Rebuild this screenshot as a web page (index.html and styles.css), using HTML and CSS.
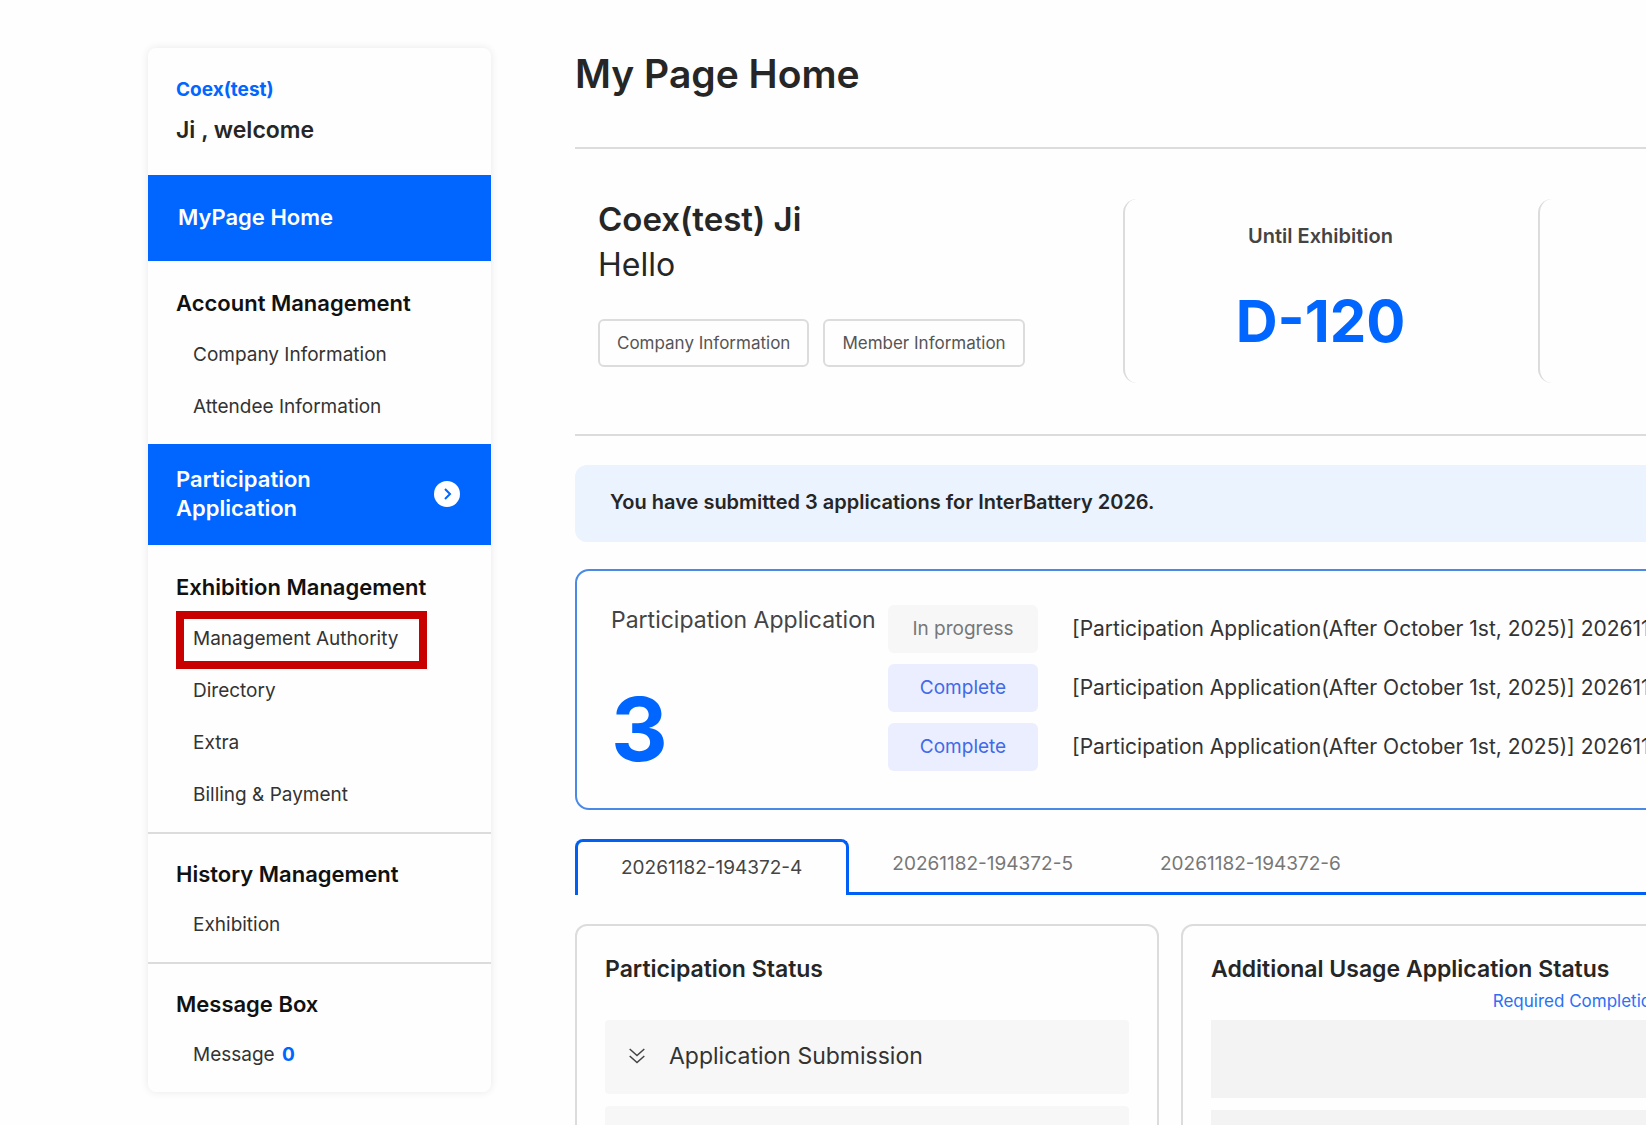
FILE: index.html
```html
<!DOCTYPE html>
<html lang="en">
<head>
<meta charset="utf-8">
<meta name="viewport" content="width=device-width, initial-scale=1">
<title>My Page Home</title>
<link rel="stylesheet" href="styles.css">
</head>
<body>
<div class="page">
  <aside class="sidebar">
    <div class="profile">
      <p class="profile-company">Coex(test)</p>
      <p class="profile-name">Ji , welcome</p>
    </div>
    <nav aria-label="My page">
      <a class="nav-block nav-home" href="#">MyPage Home</a>
      <section class="nav-group">
        <h2>Account Management</h2>
        <ul>
          <li><a href="#">Company Information</a></li>
          <li><a href="#">Attendee Information</a></li>
        </ul>
      </section>
      <a class="nav-block nav-apply" href="#">
        <span>Participation<br>Application</span>
        <svg class="nav-arrow" viewBox="0 0 26 26" aria-hidden="true"><circle cx="13" cy="13" r="13" fill="#fff"/><path d="M11 8l5 5-5 5" fill="none" stroke="#0066ff" stroke-width="2"/></svg>
      </a>
      <section class="nav-group">
        <h2>Exhibition Management</h2>
        <ul>
          <li class="marked"><a href="#">Management Authority</a></li>
          <li><a href="#">Directory</a></li>
          <li><a href="#">Extra</a></li>
          <li><a href="#">Billing &amp; Payment</a></li>
        </ul>
      </section>
      <section class="nav-group ruled">
        <h2>History Management</h2>
        <ul>
          <li><a href="#">Exhibition</a></li>
        </ul>
      </section>
      <section class="nav-group ruled">
        <h2>Message Box</h2>
        <ul>
          <li><a href="#">Message <b class="count">0</b></a></li>
        </ul>
      </section>
    </nav>
  </aside>

  <main class="main">
    <h1>My Page Home</h1>
    <section class="summary">
      <div class="greeting">
        <p class="greeting-name">Coex(test) Ji</p>
        <p class="greeting-text">Hello</p>
        <div class="greeting-actions">
          <button type="button">Company Information</button>
          <button type="button">Member Information</button>
        </div>
      </div>
      <div class="stat">
        <p class="stat-label">Until Exhibition</p>
        <p class="stat-value">D-120</p>
      </div>
      <div class="stat"></div>
    </section>

    <p class="notice">You have submitted 3 applications for InterBattery 2026.</p>

    <section class="applications">
      <div class="total">
        <h2>Participation Application</h2>
        <p class="total-value">3</p>
      </div>
      <ul class="application-list">
        <li><span class="badge">In progress</span><a href="#">[Participation Application(After October 1st, 2025)] 20261182-194372-4</a></li>
        <li><span class="badge done">Complete</span><a href="#">[Participation Application(After October 1st, 2025)] 20261182-194372-5</a></li>
        <li><span class="badge done">Complete</span><a href="#">[Participation Application(After October 1st, 2025)] 20261182-194372-6</a></li>
      </ul>
    </section>

    <div class="tabs" role="tablist">
      <button type="button" role="tab" aria-selected="true">20261182-194372-4</button>
      <button type="button" role="tab" aria-selected="false">20261182-194372-5</button>
      <button type="button" role="tab" aria-selected="false">20261182-194372-6</button>
    </div>

    <div class="cards">
      <section class="card">
        <h2>Participation Status</h2>
        <div class="row">
          <svg class="chevrons" viewBox="0 0 16 16" aria-hidden="true"><path d="M.7 1L8 7.500 15.300 1M.7 8L8 14.500 15.300 8" fill="none" stroke="#444" stroke-width="1.500"/></svg>
          Application Submission
        </div>
        <div class="row"></div>
      </section>
      <section class="card card-extra">
        <h2>Additional Usage Application Status</h2>
        <p class="card-note">Required Completion</p>
        <div class="row"></div>
        <div class="row"></div>
      </section>
    </div>
  </main>
</div>
</body>
</html>
```
FILE: styles.css
```css
* { box-sizing: border-box; }

:root {
  --blue: #0066ff;
  --line: #dcdcdc;
}

body {
  margin: 0;
  background: #fefefe;
  color: #262626;
  font-family: Inter, "Liberation Sans", sans-serif;
  font-size: 19px;
  overflow: hidden;
}

h1, h2, p, ul { margin: 0; padding: 0; }
ul { list-style: none; }
a { color: inherit; text-decoration: none; }
button { font: inherit; cursor: pointer; }

.page {
  display: flex;
  align-items: flex-start;
  gap: 84px;
  height: 100vh;
  padding: 48px 0 0 148px;
  overflow: hidden;
}

/* Sidebar */
.sidebar {
  flex: 0 0 343px;
  border-radius: 8px;
  background: #fefefe;
  box-shadow: 0 0 8px rgba(0, 0, 0, 0.09);
}

.profile {
  height: 127px;
  padding: 27px 28px 0;
  font-weight: 600;
}
.profile-company { color: var(--blue); font-size: 19px; font-weight: 700; line-height: 30px; }
.profile-name { margin-top: 7px; font-size: 23px; line-height: 36px; }

.nav-block {
  display: flex;
  align-items: center;
  background: var(--blue);
  color: #fff;
  font-size: 22px;
  font-weight: 600;
  line-height: 29px;
}
.nav-home { height: 86px; padding: 0 30px 2px; }
.nav-apply {
  justify-content: space-between;
  height: 101px;
  padding: 0 31px 2px 28px;
}
.nav-arrow { width: 26px; height: 26px; }

.nav-group { padding: 24px 28px 11px; }
.nav-group h2 {
  margin-bottom: 8px;
  color: #111;
  font-size: 22px;
  font-weight: 600;
  line-height: 36px;
}
.nav-group li {
  position: relative;
  padding-left: 17px;
  color: #333;
  line-height: 52px;
}
.nav-group.ruled { padding-top: 22px; border-top: 2px solid var(--line); }
.nav-group.ruled h2 { margin-bottom: 7px; }
.count { margin-left: 2px; color: var(--blue); font-weight: 700; }

.marked::after {
  content: "";
  position: absolute;
  inset: -2px 36px -4px 0;
  border: 8px solid #c80000;
}

/* Main column */
.main { flex: 1 0 1190px; min-width: 0; }

h1 {
  height: 99px;
  font-size: 39px;
  font-weight: 600;
  line-height: 52px;
}

.summary {
  display: flex;
  height: 289px;
  padding-top: 48px;
  border-top: 2px solid var(--line);
  border-bottom: 2px solid var(--line);
}
.greeting { flex: 0 0 548px; padding-left: 23px; }
.greeting-name { font-size: 33px; font-weight: 600; line-height: 45px; }
.greeting-text { font-size: 32px; line-height: 45px; }
.greeting-actions { display: flex; gap: 14px; margin-top: 32px; }
.greeting-actions button {
  height: 48px;
  padding: 0 17px;
  border: 2px solid var(--line);
  border-radius: 6px;
  background: #fefefe;
  color: #555;
  font-size: 17px;
}
.stat {
  flex: 0 0 415px;
  height: 184px;
  margin-top: 2px;
  padding: 22px 22px 0 0;
  border-left: 2px solid var(--line);
  border-radius: 14px;
  text-align: center;
}
.stat-label { color: #444; font-size: 20px; font-weight: 600; line-height: 30px; }
.stat-value {
  margin-top: 34px;
  color: var(--blue);
  font-size: 58px;
  font-weight: 700;
  line-height: 72px;
}

.notice {
  margin-top: 29px;
  padding: 22px 35px 25px;
  border-radius: 12px;
  background: #ebf3ff;
  font-size: 20px;
  font-weight: 600;
  line-height: 30px;
}

.applications {
  display: flex;
  margin-top: 27px;
  padding: 34px 34px 37px;
  border: 2px solid #4a8ae6;
  border-radius: 14px;
}
.total { flex: 0 0 277px; }
.total h2 { color: #444; font-size: 23px; font-weight: 400; line-height: 30px; }
.total-value {
  margin-top: 52px;
  color: var(--blue);
  font-size: 88px;
  font-weight: 700;
  line-height: 84px;
}
.application-list { display: grid; gap: 11px; }
.application-list li {
  display: flex;
  align-items: center;
  gap: 34px;
  color: #333;
  font-size: 21px;
  line-height: 48px;
  white-space: nowrap;
}
.badge {
  width: 150px;
  border-radius: 6px;
  background: #f7f7f7;
  color: #777;
  font-size: 19px;
  text-align: center;
}
.badge.done { background: #ebeeff; color: #4169e8; }

.tabs {
  display: flex;
  margin-top: 29px;
  height: 56px;
}
.tabs button {
  padding: 0 44px 5px 43px;
  border: 0 solid #0060f5;
  border-bottom-width: 3px;
  background: none;
  color: #777;
  font-size: 19px;
}
.tabs button[aria-selected="true"] {
  padding: 0 44px 2px 43px;
  border-width: 3px 3px 0;
  border-radius: 8px 8px 0 0;
  color: #444;
}
.tabs::after {
  content: "";
  flex: 1;
  border-bottom: 3px solid #0060f5;
}

.cards {
  display: grid;
  grid-template-columns: 1fr 1fr;
  gap: 22px;
  margin-top: 29px;
}
.card {
  height: 320px;
  padding: 28px;
  border: 2px solid var(--line);
  border-radius: 12px;
}
.card h2 {
  height: 66px;
  font-size: 23px;
  font-weight: 600;
  line-height: 30px;
}
.row {
  display: flex;
  align-items: center;
  gap: 24px;
  height: 74px;
  margin-bottom: 12px;
  padding: 0 24px 2px;
  border-radius: 4px;
  background: #f7f7f7;
  color: #333;
  font-size: 23px;
}
.chevrons { width: 16px; height: 16px; }
.card-extra h2 { height: 34px; }
.card-extra .row { height: 78px; border-radius: 0; background: #f3f3f3; }
.card-note {
  height: 32px;
  padding-right: 74px;
  color: #2b70f5;
  font-size: 17px;
  line-height: 26px;
  text-align: right;
}
```
